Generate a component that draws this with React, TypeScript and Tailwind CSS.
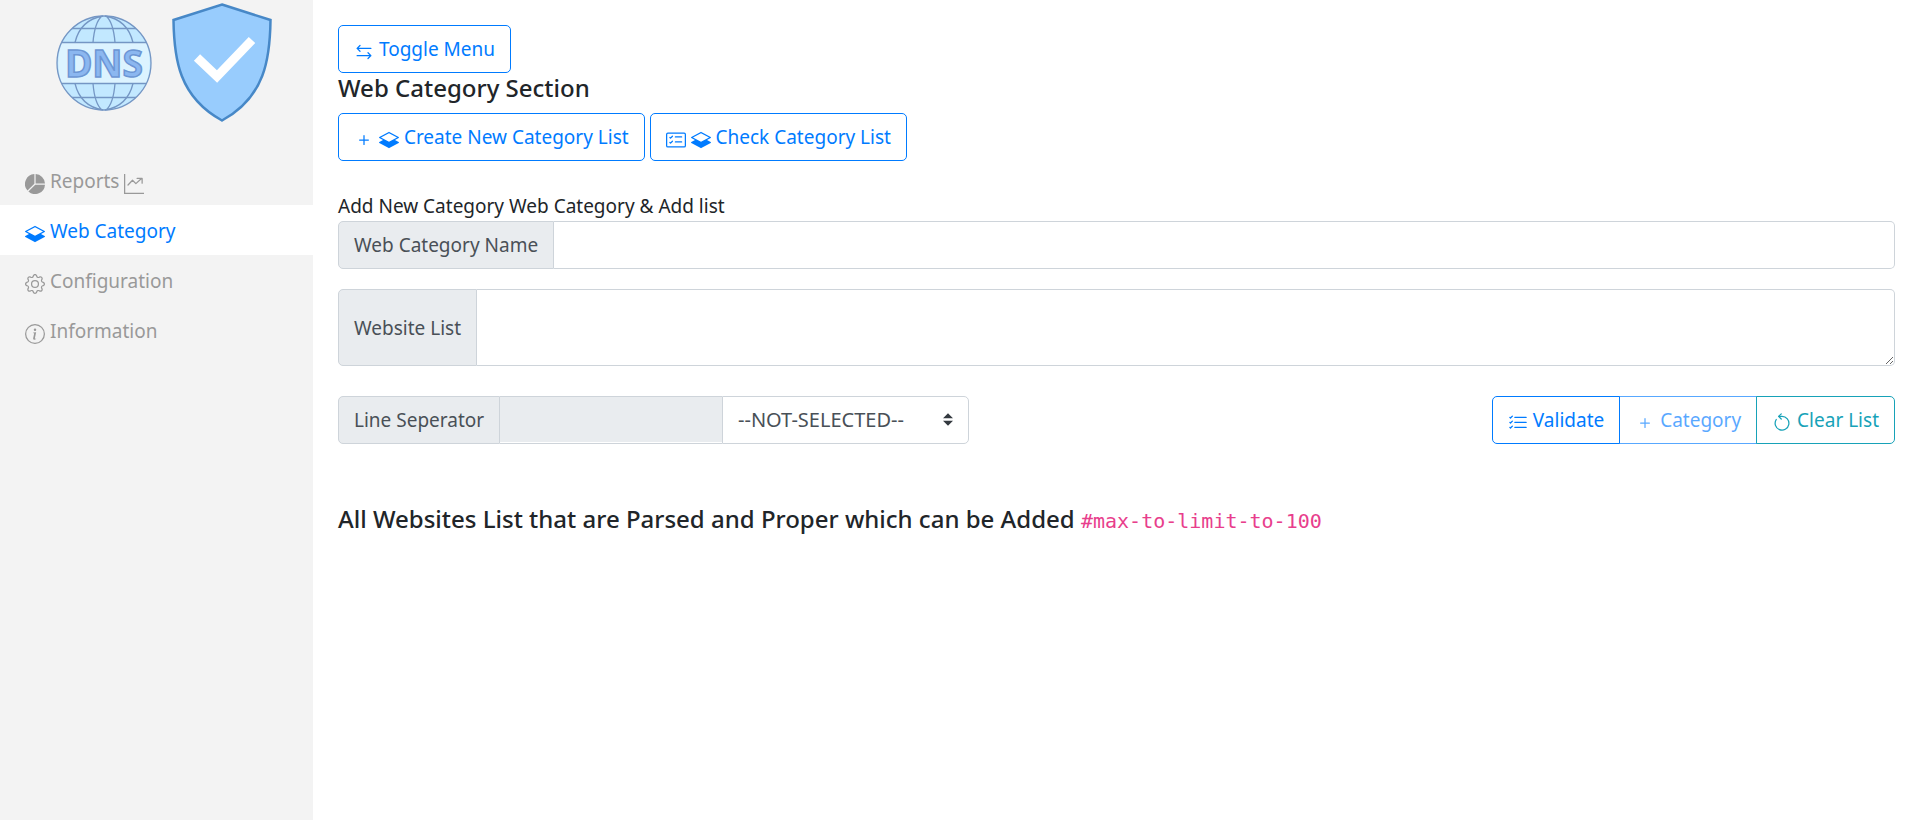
import React from "react";
import { BsPieChartFill, BsLayersHalf, BsGear, BsInfoCircle, BsPlus, BsCardChecklist, BsListCheck } from "react-icons/bs";

type IconProps = { className?: string };

function GraphUp({ className }: IconProps) {
  return (
    <svg viewBox="0 0 16 16" className={className} fill="none" stroke="currentColor" strokeLinecap="round" strokeLinejoin="round" aria-hidden="true">
      <path d="M0.500 0V15.500H16" strokeLinecap="butt" strokeLinejoin="miter" />
      <path d="M3.200 8.800L6.800 5L9.500 7.700L14 3.600M10.500 3.500H14.500V7.300" />
    </svg>
  );
}

function ArrowLeftRight({ className }: IconProps) {
  return (
    <svg viewBox="0 0 16 16" className={className} fill="none" stroke="currentColor" strokeLinecap="round" strokeLinejoin="round" aria-hidden="true">
      <path d="M4.800 2.800L2.500 5.100L4.800 7.400M2.500 5.100H13.500M11.200 8.600L13.500 10.900L11.200 13.200M13.500 10.900H2.500" />
    </svg>
  );
}

function ArrowCounterclockwise({ className }: IconProps) {
  return (
    <svg viewBox="0 0 16 16" className={className} fill="none" stroke="currentColor" strokeLinecap="round" strokeLinejoin="round" aria-hidden="true">
      <path d="M3.400 5.200A5.500 5.500 0 1 0 8 2.700H5.500" />
      <path d="M7.400 0.700L5.300 2.700L7.400 4.800" />
    </svg>
  );
}

function Globe() {
  return (
    <svg viewBox="0 0 96 96" className="size-24" aria-hidden="true">
      <circle cx="48" cy="48" r="47" fill="#c2e8ff" />
      <path d="M5.500 28H90.500Q97 48 90.500 68H5.500Q-1 48 5.500 28Z" fill="#dcf3ff" />
      <g fill="none" stroke="#7496c4" strokeWidth="1.300">
        <circle cx="48" cy="48" r="47" />
        <path d="M6 27.500H90M6 68.500H90M16 13.500H80M16 82.500H80" />
        <path d="M47 1C29 4 22 15 19 27.500M49 1C67 4 74 15 77 27.500M46 1C40 6 38 15 37 27.500M50 1C56 6 58 15 59 27.500" />
        <path d="M47 95C29 92 22 81 19 68.500M49 95C67 92 74 81 77 68.500M46 95C40 90 38 81 37 68.500M50 95C56 90 58 81 59 68.500" />
      </g>
      <text x="48" y="61.500" textAnchor="middle" className="font-['Noto_Sans',sans-serif] text-[37px] font-bold" fill="#8bb7f0" stroke="#6c96d4" strokeWidth="1.500">DNS</text>
    </svg>
  );
}

function Shield() {
  return (
    <svg viewBox="0 0 100 120" className="h-[120px] w-[100px]" aria-hidden="true">
      <path d="M50 2.500L98.500 18C98 57 93 95 50 118.500C7 95 2 57 1.500 18Z" fill="#98ccfd" stroke="#4788c7" strokeWidth="2.500" />
      <path d="M25 55.500L45 74.500L80 38" fill="none" stroke="#fff" strokeWidth="9" />
    </svg>
  );
}

const ICON = "inline size-5 align-text-bottom";

const nav = [
  { label: "Reports", icon: BsPieChartFill, trailing: GraphUp, active: false },
  { label: "Web Category", icon: BsLayersHalf, active: true },
  { label: "Configuration", icon: BsGear, active: false },
  { label: "Information", icon: BsInfoCircle, active: false },
];

const button = "h-12 border bg-white px-[15px] whitespace-nowrap";
const primary = "border-[#007bff] text-[#007bff]";
const addon = "flex items-center rounded-l-[5px] border border-[#ced4da] bg-[#e9ecef] px-[15px] whitespace-nowrap text-[#495057]";

export default function App() {
  return (
    <div className="flex min-h-screen bg-white font-['Noto_Sans',sans-serif] text-[19px] leading-[30px] text-[#212529]">
      <aside className="w-[313px] shrink-0 bg-[#f3f3f3]">
        <div className="flex items-start gap-5 pb-[33px] pl-14">
          <div className="pt-[15px]"><Globe /></div>
          <div className="pt-[2px]"><Shield /></div>
        </div>
        <nav>
          {nav.map(({ label, icon: Icon, trailing: Trailing, active }) => (
            <a
              key={label}
              href="#"
              className={active ? "block bg-white px-[25px] pt-[11px] pb-[9px] text-[#007bff]" : "block px-[25px] pt-[11px] pb-[9px] text-[#999]"}
            >
              <Icon className={ICON} /> {label} {Trailing && <Trailing className={ICON} />}
            </a>
          ))}
        </nav>
      </aside>
      <main className="min-w-0 flex-1 p-[25px]">
        <button type="button" className={`${button} ${primary} block rounded-[5px]`}>
          <ArrowLeftRight className={ICON} /> Toggle Menu
        </button>
        <h1 className="mb-[10px] text-2xl leading-[30px] font-medium">Web Category Section</h1>
        <div className="flex gap-[5px]">
          <button type="button" className={`${button} ${primary} rounded-[5px]`}>
            <BsPlus className={ICON} /> <BsLayersHalf className={ICON} /> Create New Category List
          </button>
          <button type="button" className={`${button} ${primary} rounded-[5px]`}>
            <BsCardChecklist className={ICON} /> <BsLayersHalf className={ICON} /> Check Category List
          </button>
        </div>
        <form onSubmit={(e) => e.preventDefault()}>
          <p className="mt-[30px]">Add New Category Web Category &amp; Add list</p>
          <div className="mb-5 flex">
            <label className={addon} htmlFor="category-name">Web Category Name</label>
            <input id="category-name" type="text" className="h-12 min-w-0 flex-1 rounded-r-[5px] border border-l-0 border-[#ced4da] px-[15px] text-[#495057]" />
          </div>
          <div className="mb-[30px] flex">
            <label className={addon} htmlFor="website-list">Website List</label>
            <textarea id="website-list" className="h-[77px] min-w-0 flex-1 resize-y rounded-r-[5px] border border-l-0 border-[#ced4da] px-[15px] py-[7px] text-[#495057]" />
          </div>
          <div className="flex items-start justify-between">
            <div className="flex w-[631px]">
              <label className={addon} htmlFor="separator">Line Seperator</label>
              <input type="text" disabled aria-label="Separator value" className="h-12 min-w-0 flex-1 border-y border-[#ced4da] bg-[#e9ecef] bg-clip-content pb-px" />
              <div className="relative w-[247px]">
                <select id="separator" className="h-12 w-full appearance-none rounded-r-[5px] border border-[#ced4da] bg-white px-[15px] text-xl text-[#495057]">
                  <option>--NOT-SELECTED--</option>
                </select>
                <svg viewBox="0 0 4 5" className="pointer-events-none absolute top-[17px] right-4 h-[13px] w-[10px]" aria-hidden="true">
                  <path fill="#343a40" d="M2 0L0 2h4zm0 5L0 3h4z" />
                </svg>
              </div>
            </div>
            <div className="flex">
              <button type="submit" className={`${button} ${primary} relative z-10 rounded-l-[5px]`}>
                <BsListCheck className={ICON} /> Validate
              </button>
              <button type="button" disabled className={`${button} ${primary} -ml-px opacity-65`}>
                <BsPlus className={ICON} /> Category
              </button>
              <button type="reset" className={`${button} relative z-10 -ml-px rounded-r-[5px] border-[#17a2b8] text-[#17a2b8]`}>
                <ArrowCounterclockwise className={ICON} /> Clear List
              </button>
            </div>
          </div>
        </form>
        <h2 className="mt-[60px] text-2xl leading-[30px] font-medium">
          All Websites List that are Parsed and Proper which can be Added{" "}
          <code className="font-['DejaVu_Sans_Mono',monospace] text-xl font-normal text-[#e83e8c]">#max-to-limit-to-100</code>
        </h2>
      </main>
    </div>
  );
}
